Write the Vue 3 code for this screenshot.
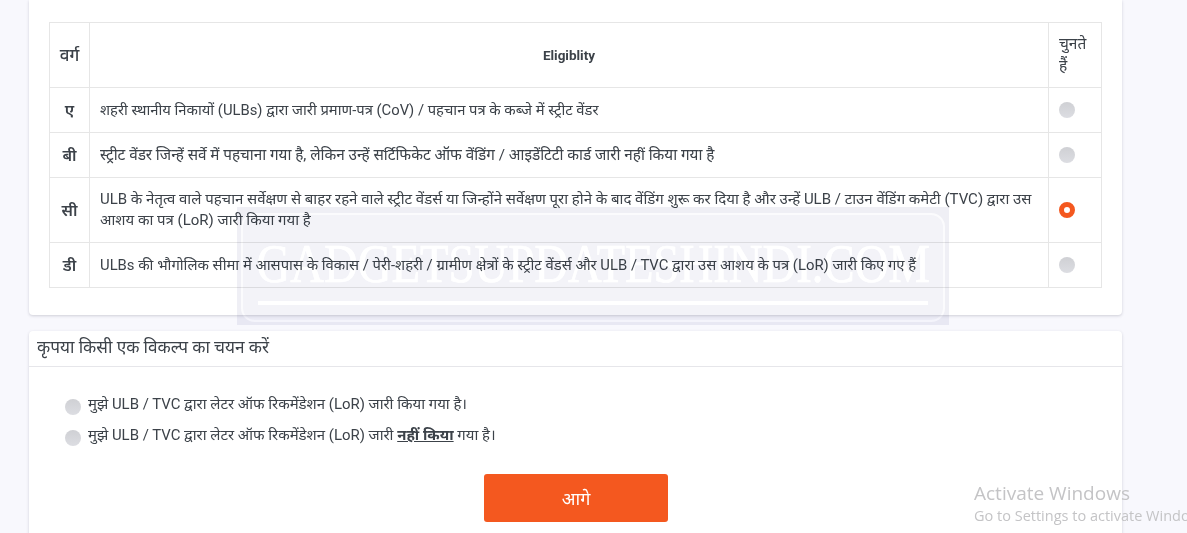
<script setup>
const rows = [
  { id: 'a', cat: 'ए', text: 'शहरी स्थानीय निकायों (ULBs) द्वारा जारी प्रमाण-पत्र (CoV) / पहचान पत्र के कब्जे में स्ट्रीट वेंडर', on: false, cls: 'r45 fa' },
  { id: 'b', cat: 'बी', text: 'स्ट्रीट वेंडर जिन्हें सर्वे में पहचाना गया है, लेकिन उन्हें सर्टिफिकेट ऑफ वेंडिंग / आइडेंटिटी कार्ड जारी नहीं किया गया है', on: false, cls: 'r45 fb' },
  { id: 'c', cat: 'सी', text: 'ULB के नेतृत्व वाले पहचान सर्वेक्षण से बाहर रहने वाले स्ट्रीट वेंडर्स या जिन्होंने सर्वेक्षण पूरा होने के बाद वेंडिंग शुरू कर दिया है और उन्हें ULB / टाउन वेंडिंग कमेटी (TVC) द्वारा उस आशय का पत्र (LoR) जारी किया गया है', on: true, cls: 'r65 fc' },
  { id: 'd', cat: 'डी', text: 'ULBs की भौगोलिक सीमा में आसपास के विकास / पेरी-शहरी / ग्रामीण क्षेत्रों के स्ट्रीट वेंडर्स और ULB / TVC द्वारा उस आशय के पत्र (LoR) जारी किए गए हैं', on: false, cls: 'r45 fd' }
]
</script>

<template>
  <div class="page">
    <section class="card top">
      <div class="grid">
        <div class="cell cat head">वर्ग</div>
        <div class="cell elig">Eligiblity</div>
        <div class="cell pick">चुनते हैं</div>
        <template v-for="r in rows" :key="r.id">
          <div class="cell cat" :class="r.cls">{{ r.cat }}</div>
          <div class="cell txt" :class="r.cls">{{ r.text }}</div>
          <div class="cell radio-cell" :class="r.cls">
            <span class="radio" :class="{ on: r.on }"></span>
          </div>
        </template>
      </div>
    </section>

    <section class="card bottom">
      <h3 class="title">कृपया किसी एक विकल्प का चयन करें</h3>
      <div class="body">
        <div class="opts">
          <label class="opt"><span class="radio"></span><span>मुझे ULB / TVC द्वारा लेटर ऑफ रिकमेंडेशन (LoR) जारी किया गया है।</span></label>
          <label class="opt"><span class="radio"></span><span>मुझे ULB / TVC द्वारा लेटर ऑफ रिकमेंडेशन (LoR) जारी <b class="u">नहीं किया</b> गया है।</span></label>
        </div>
        <button class="next">आगे</button>
      </div>
    </section>

    <div class="mark">
      <div class="mark-frame">
        <span class="mark-text">GADGETSUPDATESHINDI.COM</span>
        <span class="mark-line"></span>
      </div>
    </div>

    <div class="activate">
      <div class="a1">Activate Windows</div>
      <div class="a2">Go to Settings to activate Windows.</div>
    </div>
  </div>
</template>

<style>
html, body { margin: 0; padding: 0; height: 100%; overflow: hidden; background: #f8f8fd; }
</style>

<style scoped>
.page {
  position: relative;
  width: 1187px;
  height: 533px;
  overflow: hidden;
  background: #f8f8fd;
  font-family: Roboto, "Noto Sans", "Liberation Sans", sans-serif;
  color: #3c4249;
  padding: 0 65px 0 29px;
  box-sizing: border-box;
}
.card {
  background: #fff;
  border-radius: 4px;
  box-shadow: 0 1px 3px rgba(60, 60, 80, 0.22);
}
.top {
  padding: 22px 20px 27px;
  border-radius: 0 0 4px 4px;
}
.grid {
  display: grid;
  grid-template-columns: 40px 959px 53px;
  grid-template-rows: 65px auto auto auto auto;
  border-top: 1px solid #e6e6e6;
  border-left: 1px solid #e6e6e6;
  box-sizing: border-box;
  width: 1053px;
}
.cell {
  border-right: 1px solid #e6e6e6;
  border-bottom: 1px solid #e6e6e6;
  box-sizing: border-box;
  display: flex;
  align-items: center;
  font-size: 14px;
  line-height: 21px;
}
.r45 { height: 45px; }
.r65 { height: 65px; }
.cat {
  justify-content: center;
  font-weight: 600;
  font-size: 16px;
}
.cat.head { font-weight: 500; font-size: 17px; }
.elig {
  justify-content: center;
  font-weight: 700;
  font-size: 13.5px;
}
.pick {
  justify-content: flex-start;
  padding: 0 10px;
  font-size: 15.5px;
  line-height: 22px;
}
.txt { padding: 0 10px; }
.txt.fa { font-size: 14.8px; }
.txt.fb { font-size: 15.3px; }
.txt.fc { font-size: 15px; }
.txt.fd { font-size: 14.85px; }
.radio-cell { padding-left: 10px; }
.radio {
  flex: none;
  display: inline-block;
  width: 16px;
  height: 16px;
  border-radius: 50%;
  box-sizing: border-box;
  background: linear-gradient(180deg, #cfd0d4, #dcdde2);
}
.radio.on {
  background: #fff;
  border: 5px solid #f4581f;
}
.bottom {
  margin-top: 16px;
  min-height: 260px;
  border-radius: 4px 4px 0 0;
}
.title {
  margin: 0;
  height: 35px;
  padding-left: 8px;
  border-bottom: 1px solid #e6e6ea;
  box-sizing: content-box;
  font-size: 17.2px;
  font-weight: 400;
  line-height: 33px;
}
.body { display: flex; flex-direction: column; }
.opts {
  display: flex;
  flex-direction: column;
  gap: 10px;
  padding: 27px 0 0 36px;
}
.opt {
  display: flex;
  align-items: center;
  gap: 7px;
  font-size: 14.95px;
  line-height: 21px;
}
.opt .radio { margin-top: 4px; }
.u { text-decoration: underline; font-weight: 700; }
.next {
  align-self: flex-start;
  margin: 28px 0 0 455px;
  width: 184px;
  height: 48px;
  border: 0;
  border-radius: 3px;
  background: #f4581f;
  color: #fff;
  font-family: inherit;
  font-size: 18px;
}
.mark {
  position: absolute;
  left: 237px;
  top: 207px;
  width: 712px;
  height: 118px;
  box-sizing: border-box;
  padding: 6px 4px 3px;
  background: #efeff5;
  mix-blend-mode: multiply;
  pointer-events: none;
}
.mark-frame {
  height: 100%;
  box-sizing: border-box;
  border: 2px solid #fbfbfd;
  border-radius: 14px;
  background: #f3f3f8;
  display: flex;
  flex-direction: column;
  align-items: center;
}
.mark-text {
  font-family: "Liberation Serif", serif;
  font-size: 54px;
  line-height: 54px;
  margin-top: 22px;
  white-space: nowrap;
  color: #fff;
  -webkit-text-stroke: 0.7px #fff;
  transform: scaleX(0.865);
}
.mark-line {
  width: 670px;
  height: 4px;
  background: #fff;
  margin-top: 10px;
}
.activate {
  position: absolute;
  left: 974px;
  top: 481px;
  white-space: nowrap;
  font-family: "Open Sans", "Noto Sans", sans-serif;
  color: #c4c4c6;
}
.a1 { font-size: 19px; line-height: 24px; }
.a2 { font-size: 14.5px; line-height: 21px; }
</style>
